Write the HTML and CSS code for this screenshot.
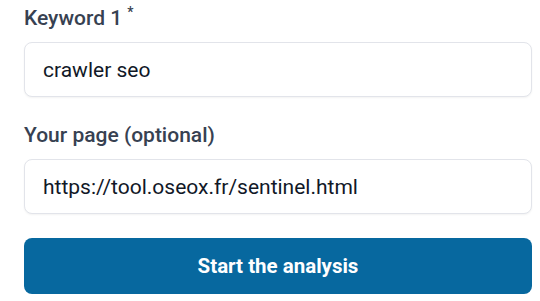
FILE: index.html
```html
<!DOCTYPE html>
<html lang="en">
  <head>
    <meta charset="UTF-8" />
    <meta name="viewport" content="width=device-width, initial-scale=1.0" />
    <title>Sentinel analysis</title>
    <link rel="stylesheet" href="styles.css">
  </head>
  <body>
    <form class="analysis-form">
      <div class="form-group">
        <label for="keyword1">Keyword 1 <sup>*</sup></label>
        <input type="text" id="keyword1" name="keyword1" value="crawler seo" />
      </div>
      <div class="form-group">
        <label for="page">Your page (optional)</label>
        <input type="text" id="page" name="page" value="https://tool.oseox.fr/sentinel.html" />
      </div>
      <button type="submit" class="btn-primary">Start the analysis</button>
    </form>
  </body>
</html>
```

FILE: styles.css
```css
body {
  font-family: Roboto, "Liberation Sans", sans-serif;
  background-color: #fff;
  margin: 0;
  padding: 0;
}
.analysis-form {
  width: 508px;
  padding: 4px 0 0 24px;
}
.form-group {
  margin-bottom: 24px;
}
label {
  display: block;
  font-size: 21px;
  font-weight: 500;
  line-height: 28px;
  color: #374151;
  margin-bottom: 10px;
}
label sup {
  font-size: 14px;
  line-height: 0;
}
input[type="text"] {
  display: block;
  box-sizing: border-box;
  width: 100%;
  height: 55px;
  padding: 0 18px;
  border: 1px solid #e2e4ea;
  border-radius: 8px;
  font-family: Roboto, "Liberation Sans", sans-serif;
  font-size: 21px;
  color: #111827;
  background: #fff;
  box-shadow: 0 1px 2px rgba(0, 0, 0, 0.05);
}
.btn-primary {
  display: block;
  width: 100%;
  height: 56px;
  border: none;
  border-radius: 8px;
  background-color: #07689f;
  color: #fff;
  font-family: Roboto, "Liberation Sans", sans-serif;
  font-size: 20.5px;
  font-weight: 700;
  cursor: pointer;
}
```
